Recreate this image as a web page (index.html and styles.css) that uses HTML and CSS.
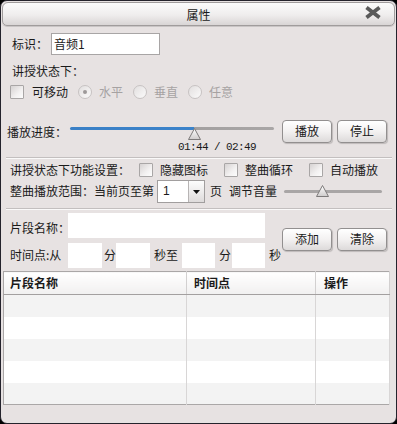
FILE: index.html
```html
<!DOCTYPE html>
<html lang="zh-CN">
<head>
    <meta charset="UTF-8">
    <title>属性</title>
    <link rel="stylesheet" href="styles.css">
</head>
<body>
<div class="win">
    <div class="titlebar">
        <span></span>
        <span class="title">属性</span>
        <span class="close">
            <svg width="18" height="13" viewBox="0 0 18 13"><path d="M2.5 1.5 L15.5 11.5 M15.5 1.5 L2.5 11.5" stroke="#5a5a5a" stroke-width="3.8"/></svg>
        </span>
    </div>

    <div class="row r-id">
        <span class="lbl">标识：</span>
        <span class="field f-id">音频1</span>
    </div>
    <div class="row r-state">讲授状态下：</div>
    <div class="row r-move">
        <span class="chk"><i class="cb"></i>可移动</span>
        <span class="rad on"><i class="rb"></i>水平</span>
        <span class="rad"><i class="rb"></i>垂直</span>
        <span class="rad"><i class="rb"></i>任意</span>
    </div>

    <div class="row r-play">
        <span class="lbl play-lbl">播放进度：</span>
        <div class="prog">
            <div class="rail">
                <div class="track blue"></div>
                <svg class="thumb thumb-prog" width="13" height="12" viewBox="0 0 13 12">
                    <defs><linearGradient id="tg" x1="0" y1="0" x2="0" y2="1"><stop offset="0" stop-color="#ffffff"/><stop offset="1" stop-color="#cfcccc"/></linearGradient></defs>
                    <polygon points="6.5,0.5 12.5,11.5 0.5,11.5" fill="url(#tg)" stroke="#7d7a7a"/>
                </svg>
            </div>
            <div class="time">01:44 / 02:49</div>
        </div>
        <div class="btns play-btns">
            <span class="btn">播放</span>
            <span class="btn">停止</span>
        </div>
    </div>

    <div class="sep"></div>

    <div class="row r-func">
        <span class="lbl func-lbl">讲授状态下功能设置：</span>
        <span class="chk"><i class="cb"></i>隐藏图标</span>
        <span class="chk"><i class="cb"></i>整曲循环</span>
        <span class="chk"><i class="cb"></i>自动播放</span>
    </div>
    <div class="row r-range">
        <span class="lbl">整曲播放范围：当前页至第</span>
        <span class="sel">
            <span class="sel-v">1</span>
            <span class="sel-btn"><svg width="7" height="4" viewBox="0 0 7 4"><path d="M0 0H7L3.5 4Z" fill="#111"/></svg></span>
        </span>
        <span class="u page">页</span>
        <span class="u vol-lbl">调节音量</span>
        <div class="vol">
            <div class="track gray"></div>
            <svg class="thumb thumb-vol" width="13" height="12" viewBox="0 0 13 12">
                <polygon points="6.5,0.5 12.5,11.5 0.5,11.5" fill="url(#tg)" stroke="#7d7a7a"/>
            </svg>
        </div>
    </div>

    <div class="sep sep2"></div>

    <div class="seg">
        <div class="seg-fields">
            <div class="row r-name">
                <span class="lbl w58 name-lbl">片段名称：</span>
                <span class="field f-name"></span>
            </div>
            <div class="row r-time">
                <span class="lbl w58">时间点:从</span>
                <span class="field f-t"></span>
                <span class="u m2">分</span>
                <span class="field f-t"></span>
                <span class="u m4">秒至</span>
                <span class="field f-t2 m4"></span>
                <span class="u m4">分</span>
                <span class="field f-t2 m1"></span>
                <span class="u m4">秒</span>
            </div>
        </div>
        <div class="btns seg-btns">
            <span class="btn">添加</span>
            <span class="btn">清除</span>
        </div>
    </div>

    <table class="grid">
        <thead>
            <tr><th class="c1">片段名称</th><th class="c2">时间点</th><th class="c3">操作</th></tr>
        </thead>
        <tbody>
            <tr><td></td><td></td><td></td></tr>
            <tr><td></td><td></td><td></td></tr>
            <tr><td></td><td></td><td></td></tr>
            <tr><td></td><td></td><td></td></tr>
            <tr><td></td><td></td><td></td></tr>
        </tbody>
    </table>
</div>
</body>
</html>
```

FILE: styles.css
```css
* {
    box-sizing: border-box;
}
html, body {
    margin: 0;
    padding: 0;
    background: #000;
}
body {
    font-family: "Noto Sans CJK SC", "Noto Sans", sans-serif;
    font-size: 12px;
    line-height: 1.2;
    color: #1a1a1a;
}
.win {
    width: 397px;
    height: 424px;
    background: #e7e2e2;
    border: 1px solid #24232c;
    border-radius: 7px;
    overflow: hidden;
}

/* title bar */
.titlebar {
    display: grid;
    grid-template-columns: 1fr auto 1fr;
    align-items: start;
    height: 24px;
    margin: 1px 1px 0;
    border: 1px solid #a09c9c;
    border-radius: 6px 6px 5px 5px;
    background: linear-gradient(#fbfbfb, #efeded 55%, #d9d5d5);
    box-shadow: 0 1px 0 #c9c5c5;
}
.title {
    margin-top: 3px;
    line-height: 17px;
}
.close {
    justify-self: end;
    margin: 3px 12px 0 0;
    height: 13px;
}
.close svg {
    display: block;
}

/* rows */
.row {
    display: flex;
    align-items: center;
}
.lbl {
    white-space: nowrap;
}
.field {
    background: #fff;
    height: 25px;
}
.r-id {
    height: 22px;
    margin-top: 7px;
    padding-left: 11px;
}
.f-id {
    width: 109px;
    height: 22px;
    margin-left: 3px;
    padding-left: 2px;
    border: 1px solid #a8a5a5;
    line-height: 20px;
}
.r-state {
    height: 18px;
    margin-top: 7px;
    padding-left: 11px;
}
.r-move {
    height: 18px;
    margin-top: 3px;
    padding-left: 9px;
}

.chk, .rad {
    display: flex;
    align-items: center;
    white-space: nowrap;
}
.cb {
    width: 14px;
    height: 14px;
    margin-right: 8px;
    border: 1px solid #a9a6a6;
    border-radius: 1px;
    background: linear-gradient(135deg, #d6d2d2, #f3f1f1 60%, #fdfdfd);
}
.rad {
    margin-left: 10px;
    color: #a6a2a2;
}
.rb {
    position: relative;
    width: 14px;
    height: 14px;
    margin-right: 7px;
    border: 1px solid #c7c3c3;
    border-radius: 50%;
    background: linear-gradient(135deg, #e2dfdf, #fbfafa);
}
.rad.on .rb::after {
    content: "";
    position: absolute;
    left: 4px;
    top: 4px;
    width: 4px;
    height: 4px;
    border-radius: 50%;
    background: #9d9999;
}

/* play progress */
.r-play {
    align-items: flex-start;
    height: 36px;
    margin-top: 18px;
    padding-left: 6px;
}
.play-lbl {
    line-height: 26px;
}
.prog {
    width: 204px;
    margin-left: 3px;
}
.rail {
    position: relative;
    height: 14px;
    margin-top: 8px;
}
.track {
    height: 3px;
    margin-top: 5px;
    border-radius: 2px;
}
.track.blue {
    background: linear-gradient(to right, #3a80c6 0, #3c83ca 61%, #a3a0a0 61%, #a9a6a6 100%);
}
.track.gray {
    background: #a9a6a6;
}
.thumb {
    position: absolute;
    display: block;
}
.thumb-prog {
    left: 118px;
    top: 1px;
}
.time {
    padding-left: 108px;
    font-family: "Liberation Mono", monospace;
    font-size: 11px;
    letter-spacing: -0.6px;
    line-height: 12px;
}
.btns {
    display: flex;
    gap: 5px;
}
.play-btns {
    margin: 1px 0 0 8px;
}
.btn {
    display: flex;
    align-items: center;
    justify-content: center;
    width: 50px;
    height: 23px;
    border: 1px solid #928f8f;
    border-radius: 4px;
    background: linear-gradient(#ffffff, #f3f1f1 50%, #dddada);
    box-shadow: 1px 1px 1px rgba(0, 0, 0, 0.18);
}

.sep {
    height: 2px;
    margin: 2px 4px 0 5px;
    border-top: 1px solid #c3bfbf;
    border-bottom: 1px solid #faf9f9;
}
.sep2 {
    margin-top: 5px;
}

/* function settings */
.r-func {
    height: 18px;
    margin-top: 2px;
    padding-left: 9px;
}
.func-lbl {
    margin-right: 9px;
}
.r-func .cb {
    margin-right: 7px;
}
.r-func .chk + .chk {
    margin-left: 16px;
}

.r-range {
    height: 23px;
    margin-top: 1px;
    padding-left: 9px;
}
.sel {
    display: flex;
    width: 48px;
    height: 23px;
    margin-left: 3px;
    background: #fff;
    border: 1px solid #a19e9e;
}
.sel-v {
    flex: 1;
    padding-left: 5px;
    font-family: "Liberation Sans", sans-serif;
    line-height: 21px;
}
.sel-btn {
    display: flex;
    align-items: center;
    justify-content: center;
    width: 16px;
    border-left: 1px solid #b7b4b4;
    background: linear-gradient(#fdfdfd, #dedbdb);
}
.page {
    margin-left: 5px;
}
.vol-lbl {
    margin-left: 7px;
}
.vol {
    position: relative;
    width: 98px;
    height: 14px;
    margin-left: 7px;
}
.thumb-vol {
    left: 32px;
    top: 0;
}

/* segment form */
.seg {
    display: flex;
    height: 55px;
    margin-top: 3px;
    padding-left: 9px;
}
.seg-fields {
    width: 272px;
}
.seg-btns {
    margin-top: 15px;
}
.r-name {
    height: 25px;
}
.w58 {
    width: 58px;
}
.name-lbl {
    margin-top: 5px;
}
.f-name {
    width: 197px;
}
.r-time {
    height: 25px;
    margin-top: 5px;
}
.f-t {
    width: 34px;
}
.f-t2 {
    width: 33px;
}
.m1 {
    margin-left: 1px;
}
.m2 {
    margin-left: 2px;
}
.m4 {
    margin-left: 4px;
}

/* list */
.grid {
    width: 387px;
    margin: 3px 0 0 2px;
    border-collapse: collapse;
    table-layout: fixed;
    border: 1px solid #aaa7a7;
    background: #fff;
}
.grid th {
    height: 23px;
    padding: 0 0 0 7px;
    text-align: left;
    font-weight: bold;
    background: linear-gradient(#ffffff, #f1f0f0);
    border-bottom: 1px solid #a3a0a0;
    border-right: 1px solid #d2d0d0;
}
.grid td {
    height: 22px;
    padding: 0;
    border-right: 1px solid #d8d6d6;
}
.grid tbody tr:nth-child(odd) td {
    background: #f3f3f3;
}
.grid .c1 {
    width: 183px;
    padding-left: 6px;
}
.grid .c2 {
    width: 129px;
}
.grid .c3 {
    padding-left: 8px;
}
```
